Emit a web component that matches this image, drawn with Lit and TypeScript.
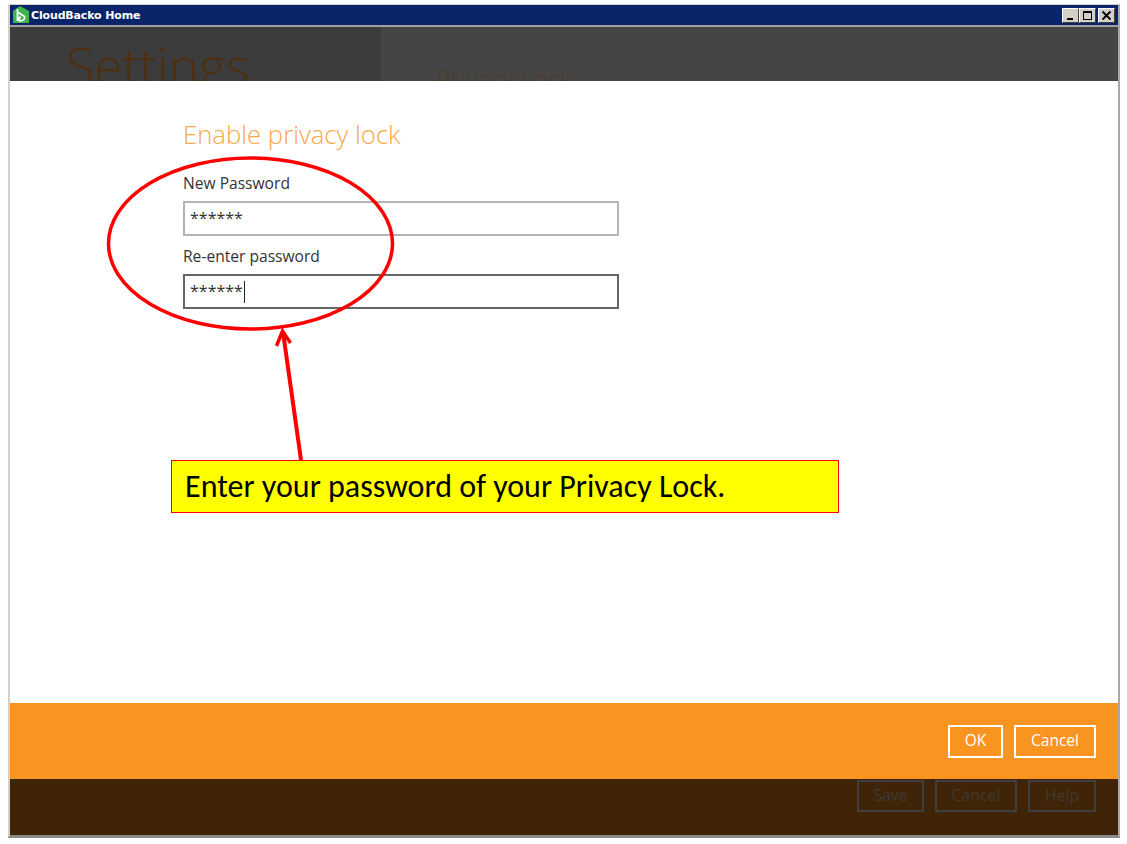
import { LitElement, html, css, svg } from "lit";
import { customElement } from "lit/decorators.js";

@customElement("app-root")
export class AppRoot extends LitElement {
  static styles = css`
    :host { display: block; width: 1127px; height: 844px; background: #fff; position: relative; overflow: hidden; font-family: "Open Sans", "Noto Sans", sans-serif; }
    .window { position: absolute; left: 8px; top: 4px; width: 1112px; height: 834px; box-sizing: border-box; background: #d4d0c8; border: 1px solid #d4d0c8; border-width: 1px 2px 3px 2px; border-bottom-color: #8a8a86; border-right-color: #a8a8a4; display: flex; flex-direction: column; }
    .title { height: 20px; background: #0a246a; display: flex; align-items: center; color: #fff; font: bold 11px Tahoma, "DejaVu Sans", sans-serif; flex: none; padding-left: 2px; gap: 1px; }
    .title svg.logo { flex: none; }
    .title .name { flex: 1; font-size: 11px; letter-spacing: -0.15px; }
    .ctrls { display: flex; padding-right: 3px; }
    .ctrl { width: 17px; height: 15px; background: #d4d0c8; box-sizing: border-box; border: 1px solid; border-color: #fff #404040 #404040 #fff; display: flex; align-items: center; justify-content: center; }
    .ctrl.close { margin-left: 2px; }
    .sep { height: 2px; background: #a0a0a0; flex: none; }
    .client { flex: 1; display: flex; flex-direction: column; min-height: 0; background: #fff; }
    .top { height: 54px; flex: none; display: flex; overflow: hidden; background: #454545; }
    .top .left { width: 371px; background: #3c3c3c; overflow: hidden; padding-left: 56px; box-sizing: border-box; }
    .top .left span { font-size: 51.500px; font-weight: 300; color: #4d2f10; line-height: 76px; display: block; white-space: nowrap; }
    .top .right { flex: 1; padding-left: 55px; overflow: hidden; }
    .top .right span { font-size: 25px; color: #4d3a26; line-height: 28px; display: block; padding-top: 38px; font-weight: 300; white-space: nowrap; }
    .main { flex: 1; padding: 38px 0 0 173px; min-height: 0; color: #333; }
    h1 { margin: 0; font-size: 25.700px; font-weight: 300; color: #f9a84b; line-height: 32px; height: 32px; }
    .label { font-size: 15.600px; line-height: 20px; color: #333; margin-top: 22px; height: 20px; }
    .label.second { margin-top: 10px; }
    .input { width: 436px; height: 35px; box-sizing: border-box; border: 2px solid #b4b4b4; margin-top: 8px; padding-left: 5px; font-size: 16px; line-height: 27px; color: #333; display: flex; align-items: center; }
    .input.focus { border-color: #666; }
    .caret { width: 1px; height: 22px; background: #222; margin-left: 1px; }
    .orange { height: 76px; flex: none; background: #f99420; display: flex; justify-content: flex-end; align-items: center; gap: 11px; padding-right: 22px; }
    .btn { height: 33px; box-sizing: border-box; border: 2px solid #fff; color: #fff; font-size: 15.500px; display: flex; align-items: center; justify-content: center; padding-bottom: 2px; }
    .ok { width: 55px; } .cancel { width: 82px; }
    .brown { height: 56px; flex: none; background: #402408; display: flex; justify-content: flex-end; gap: 11px; padding: 1px 22px 0 0; box-sizing: border-box; }
    .dbtn { height: 32px; box-sizing: border-box; border: 2px solid #3f3f3f; color: #3f3a32; font-size: 15.800px; display: flex; align-items: center; justify-content: center; padding-bottom: 2px; }
    .overlay { position: absolute; left: 0; top: 0; pointer-events: none; }
    .note { position: absolute; left: 171px; top: 460px; width: 668px; height: 53px; box-sizing: border-box; border: 1px solid #f00; background: #ff0; color: #000; font: 32px/52px Carlito, "Open Sans", sans-serif; padding-left: 13px; white-space: nowrap; }
  `;

  render() {
    return html`
      <div class="window">
        <div class="title">
          <svg class="logo" width="18" height="18" viewBox="0 0 18 18">
            <path d="M1 5 L7 0.500 L9 0.500 L17 5 L17 17 L1 17 Z" fill="#3cb54a"/>
            <path d="M5.500 3 L5.500 15 M5.500 6 L12.500 10.500 Q13.500 14.500 8 15 Q6 13 8.500 10.500" fill="none" stroke="#fff" stroke-width="1.800"/>
          </svg>
          <span class="name">CloudBacko Home</span>
          <div class="ctrls">
            <div class="ctrl"><svg width="11" height="11"><rect x="2" y="8" width="6" height="2" fill="#000"/></svg></div>
            <div class="ctrl"><svg width="11" height="11"><rect x="1.500" y="1.500" width="8" height="8" fill="none" stroke="#000"/><rect x="1" y="1" width="9" height="2" fill="#000"/></svg></div>
            <div class="ctrl close"><svg width="11" height="11"><path d="M1.500 1.500 L9.500 9.500 M9.500 1.500 L1.500 9.500" stroke="#000" stroke-width="1.800"/></svg></div>
          </div>
        </div>
        <div class="sep"></div>
        <div class="client">
          <div class="top">
            <div class="left"><span>Settings</span></div>
            <div class="right"><span>Privacy Lock</span></div>
          </div>
          <div class="main">
            <h1>Enable privacy lock</h1>
            <div class="label">New Password</div>
            <div class="input">******</div>
            <div class="label second">Re-enter password</div>
            <div class="input focus">******<span class="caret"></span></div>
          </div>
          <div class="orange">
            <div class="btn ok">OK</div>
            <div class="btn cancel">Cancel</div>
          </div>
          <div class="brown">
            <div class="dbtn" style="width:67px">Save</div>
            <div class="dbtn" style="width:82px">Cancel</div>
            <div class="dbtn" style="width:68px">Help</div>
          </div>
        </div>
      </div>
      <svg class="overlay" width="1127" height="844">
        ${svg`<ellipse cx="250.500" cy="243.500" rx="142" ry="85.500" fill="none" stroke="#f00" stroke-width="3.500"/>
        <path d="M301 460 L283 332" fill="none" stroke="#f00" stroke-width="4"/>
        <path d="M276.500 346 L282.500 331 L290.500 343" fill="none" stroke="#f00" stroke-width="3.500"/>`}
      </svg>
      <div class="note">Enter your password of your Privacy Lock.</div>
    `;
  }
}
